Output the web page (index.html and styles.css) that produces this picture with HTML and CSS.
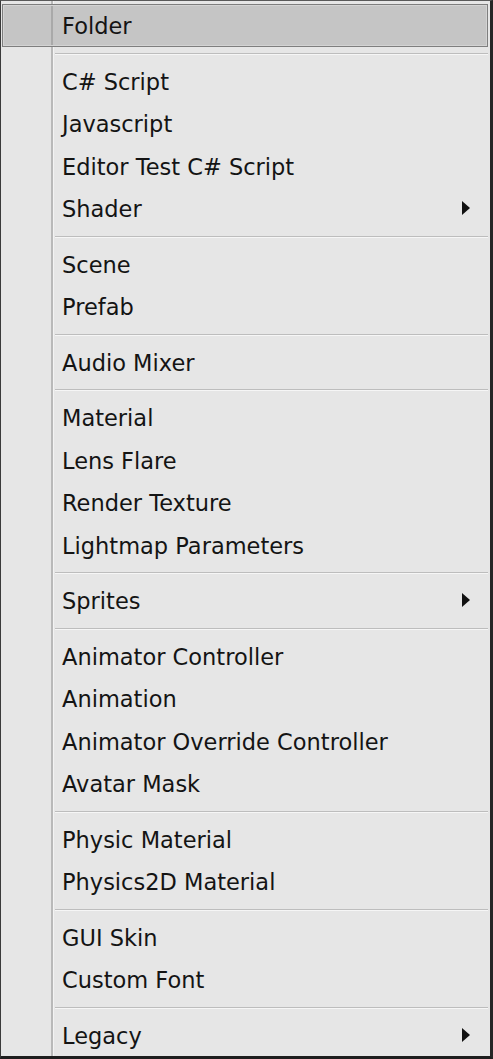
FILE: index.html
```html
<!DOCTYPE html>
<html>
<head>
<meta charset="utf-8">
<link rel="stylesheet" href="styles.css">
</head>
<body>
<div class="menu">
  <div class="item active"><span class="label">Folder</span></div>
  <div class="sep"></div>
  <div class="item"><span class="label">C# Script</span></div>
  <div class="item"><span class="label">Javascript</span></div>
  <div class="item"><span class="label">Editor Test C# Script</span></div>
  <div class="item"><span class="label">Shader</span><span class="arrow"></span></div>
  <div class="sep"></div>
  <div class="item"><span class="label">Scene</span></div>
  <div class="item"><span class="label">Prefab</span></div>
  <div class="sep"></div>
  <div class="item"><span class="label">Audio Mixer</span></div>
  <div class="sep"></div>
  <div class="item"><span class="label">Material</span></div>
  <div class="item"><span class="label">Lens Flare</span></div>
  <div class="item"><span class="label">Render Texture</span></div>
  <div class="item"><span class="label">Lightmap Parameters</span></div>
  <div class="sep"></div>
  <div class="item"><span class="label">Sprites</span><span class="arrow"></span></div>
  <div class="sep"></div>
  <div class="item"><span class="label">Animator Controller</span></div>
  <div class="item"><span class="label">Animation</span></div>
  <div class="item"><span class="label">Animator Override Controller</span></div>
  <div class="item"><span class="label">Avatar Mask</span></div>
  <div class="sep"></div>
  <div class="item"><span class="label">Physic Material</span></div>
  <div class="item"><span class="label">Physics2D Material</span></div>
  <div class="sep"></div>
  <div class="item"><span class="label">GUI Skin</span></div>
  <div class="item"><span class="label">Custom Font</span></div>
  <div class="sep"></div>
  <div class="item"><span class="label">Legacy</span><span class="arrow"></span></div>
</div>
</body>
</html>
```
FILE: styles.css
```css
html, body {
  margin: 0;
  padding: 0;
  background: #e6e6e6;
}
.menu {
  box-sizing: border-box;
  width: 493px;
  height: 1059px;
  border-top: 1px solid #5a5a5a;
  border-left: 1px solid #3a3a3a;
  border-right: 3px solid #262626;
  border-bottom: 3px solid #1e1e1e;
  padding: 3px 2px 0 1px;
  background:
    linear-gradient(to right, transparent 50px, #b9b9b9 50px, #b9b9b9 52px, #f3f3f3 52px, #f3f3f3 53px, transparent 53px),
    #e6e6e6;
  font-family: "DejaVu Sans", "Noto Sans", sans-serif;
  font-size: 22.5px;
  color: #141414;
  display: flex;
  flex-direction: column;
}
.item {
  box-sizing: border-box;
  height: 42.5px;
  flex: none;
  display: flex;
  align-items: center;
  justify-content: space-between;
  padding: 0 18px 0 60px;
}
.item.active {
  border: 1px solid #7e7e7e;
  padding-left: 59px;
  padding-right: 17px;
  background:
    linear-gradient(to right, transparent 48px, #a9a9a9 48px, #a9a9a9 50px, transparent 50px),
    #c5c5c5;
  box-shadow: inset 0 0 0 1px #d3d3d3;
}
.label {
  white-space: nowrap;
  line-height: 1;
  padding-top: 2px;
}
.arrow {
  width: 0;
  height: 0;
  border-left: 8px solid #111;
  border-top: 7px solid transparent;
  border-bottom: 7px solid transparent;
}
.sep {
  flex: none;
  box-sizing: border-box;
  height: 13px;
  margin-left: 53px;
  padding-top: 6px;
}
.sep::before {
  content: "";
  display: block;
  height: 1px;
  background: #bdbdbd;
  border-bottom: 1px solid #f6f6f6;
}
```
